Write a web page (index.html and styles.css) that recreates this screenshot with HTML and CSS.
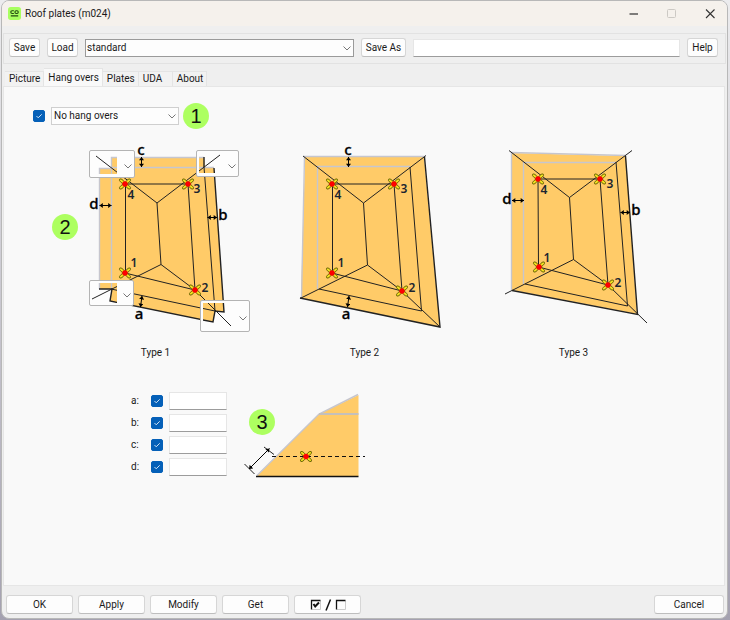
FILE: index.html
```html
<!DOCTYPE html>
<html lang="en">
<head>
<meta charset="utf-8">
<title>Roof plates (m024)</title>
<link rel="stylesheet" href="styles.css">
</head>
<body>
<svg class="defs" aria-hidden="true">
  <defs>
    <symbol id="chevron" viewBox="0 0 8 5"><path d="M.5 .5 4 4 7.5 .5" fill="none" stroke="#777"/></symbol>
    <g id="node">
      <g fill="#f0e020" stroke="#5a5600" stroke-width=".8">
        <ellipse cx="4" cy="0" rx="3.2" ry="1.5" transform="rotate(42)"/>
        <ellipse cx="4" cy="0" rx="3.2" ry="1.5" transform="rotate(138)"/>
        <ellipse cx="4" cy="0" rx="3.2" ry="1.5" transform="rotate(222)"/>
        <ellipse cx="4" cy="0" rx="3.2" ry="1.5" transform="rotate(318)"/>
      </g>
      <circle r="2.7" fill="#f00"/>
    </g>
    <marker id="tip" viewBox="0 0 4 6" refX="4" refY="3" markerWidth="4" markerHeight="5" markerUnits="userSpaceOnUse" orient="auto-start-reverse"><path d="M0 0 4 3 0 6z"/></marker>
    <g id="roof-notched">
      <path class="fill" d="M99 168H111V157H204L205 168H214L224 312 215 311 213 322 110 301 112 289H99z"/>
      <path class="pale" d="M99.500 289V168.500H111M111.500 289V157.500H204M111 167.500H214"/>
      <path class="edge" d="M214 168 224 312 215 311 213 322 110 301 112 289H99M204 157V167"/>
      <path class="line" d="M204 167 215 311 111 289M96 156 157 203 161 264.500 92 299M220 155 157 203M161 264.500 195 290 231 326"/>
    </g>
  </defs>
</svg>

<div class="window">
  <header class="titlebar">
    <svg class="logo" viewBox="0 0 14 14" aria-hidden="true"><rect width="14" height="14" rx="3" fill="#a8ff60"/><g fill="none" stroke="#234a12" stroke-width="1.200"><path d="M6.300 4H4.500Q3 4 3 5.500T4.500 7H6.300M3 9.500H11"/><rect x="7.500" y="4" width="3.500" height="3" rx="1.300"/></g></svg>
    <h1>Roof plates (m024)</h1>
    <div class="caption-buttons">
      <button aria-label="Minimize"><svg viewBox="0 0 10 10"><path d="M.5 5H9" stroke="#555" stroke-width="1.300"/></svg></button>
      <button aria-label="Maximize" disabled><svg viewBox="0 0 10 10"><rect x=".5" y=".5" width="8" height="8" rx="1" fill="none" stroke="#ccc9c4"/></svg></button>
      <button aria-label="Close"><svg viewBox="0 0 10 10"><path d="M1 .5 9.500 9M9.500 .5 1 9" stroke="#333" stroke-width="1.100"/></svg></button>
    </div>
  </header>

  <div class="toolbar">
    <button class="btn">Save</button>
    <button class="btn">Load</button>
    <div class="select preset"><select aria-label="Saved settings"><option>standard</option></select><svg class="chevron" aria-hidden="true"><use href="#chevron"/></svg></div>
    <button class="btn wide">Save As</button>
    <input class="text name" type="text" aria-label="Save as name">
    <button class="btn">Help</button>
  </div>

  <nav class="tabs" role="tablist">
    <button role="tab">Picture</button>
    <button role="tab" aria-selected="true">Hang overs</button>
    <button role="tab">Plates</button>
    <button role="tab">UDA</button>
    <button role="tab">About</button>
  </nav>

  <main class="panel">
    <div class="mode">
      <span class="check"><input type="checkbox" checked aria-label="Use hang over type"><svg viewBox="0 0 12 12" aria-hidden="true"><path d="M3.500 6 5.200 7.800 8.700 4.300"/></svg></span>
      <div class="select kind"><select aria-label="Hang over type"><option>No hang overs</option></select><svg class="chevron" aria-hidden="true"><use href="#chevron"/></svg></div>
      <span class="badge">1</span>
    </div>

    <div class="types">
      <figure>
        <svg class="plan" viewBox="51 136 209 199">
          <use href="#roof-notched"/>
          <path class="line" d="M125.500 273V184H188L195 290 125 273"/>
          <path class="dim" d="M141.500 157V167"/><path class="dim" d="M99.500 205.500H111.500"/><path class="dim" d="M207.500 217.500H217"/><path class="dim" d="M142 296 140.500 307"/>
          <use href="#node" x="125" y="184"/><use href="#node" x="188" y="184"/><use href="#node" x="125" y="273"/><use href="#node" x="195" y="290"/>
          <g class="letter"><text x="141" y="155">c</text><text x="94" y="209">d</text><text x="223" y="220">b</text><text x="139" y="319">a</text></g>
          <g class="number"><text x="131" y="199">4</text><text x="197" y="193">3</text><text x="134" y="267">1</text><text x="205" y="292">2</text></g>
        </svg>
        <span class="badge corner-badge">2</span>
        <div class="select corner corner-4"><select aria-label="Corner 4"><option></option></select><svg class="thumb" viewBox="92 153 25 21" width="25" height="21"><use href="#roof-notched"/></svg><svg class="chevron" aria-hidden="true"><use href="#chevron"/></svg></div>
        <div class="select corner corner-3"><select aria-label="Corner 3"><option></option></select><svg class="thumb" viewBox="199 153 22 20" width="22" height="20"><use href="#roof-notched"/></svg><svg class="chevron" aria-hidden="true"><use href="#chevron"/></svg></div>
        <div class="select corner corner-1"><select aria-label="Corner 1"><option></option></select><svg class="thumb" viewBox="92 283 25 20" width="25" height="20"><use href="#roof-notched"/></svg><svg class="chevron" aria-hidden="true"><use href="#chevron"/></svg></div>
        <div class="select corner corner-2"><select aria-label="Corner 2"><option></option></select><svg class="thumb" viewBox="203 303 29 25" width="29" height="25"><use href="#roof-notched"/></svg><svg class="chevron" aria-hidden="true"><use href="#chevron"/></svg></div>
        <figcaption>Type 1</figcaption>
      </figure>

      <figure>
        <svg class="plan" viewBox="260 136 209 199">
          <path class="fill" d="M305 157H424L440 327 301 298z"/>
          <path class="pale" d="M301.500 298 304.500 156.500H425M317.500 289V166.500H410"/>
          <path class="edge" d="M424.500 157 440 327 300 298"/>
          <path class="line" d="M410 167 421.500 311 319 289M303 156 363.500 203 367.500 265 300 298.500M426 155.500 363.500 203M367.500 265 402 291 440 327M332.500 273V184H394L402 291 332 273"/>
          <path class="dim" d="M348.500 157V167"/><path class="dim" d="M349 296 347.500 307"/>
          <use href="#node" x="332" y="184"/><use href="#node" x="394" y="184"/><use href="#node" x="332" y="273"/><use href="#node" x="402" y="291"/>
          <g class="letter"><text x="348" y="155">c</text><text x="346" y="319">a</text></g>
          <g class="number"><text x="338" y="199">4</text><text x="404" y="193">3</text><text x="341" y="267">1</text><text x="412" y="292">2</text></g>
        </svg>
        <figcaption>Type 2</figcaption>
      </figure>

      <figure>
        <svg class="plan" viewBox="469 136 209 199">
          <path class="fill" d="M512 153 626 156 637 314 512 290z"/>
          <path class="pale" d="M511.500 290V152.500L626 155.500M523.500 284V162.500H616"/>
          <path class="edge" d="M625.500 156 637.500 314.500 512 290.500"/>
          <path class="line" d="M616 162 627.500 306 525 284M509 150.500 569.500 197.500 573.500 259.500 505 294M632 150.500 569.500 197.500M573.500 259.500 608 285 647 323M538 179 538.500 267 608 285 600 179H538"/>
          <path class="dim" d="M512 200.500H524"/><path class="dim" d="M620.500 212.500H630"/>
          <use href="#node" x="538" y="179"/><use href="#node" x="600" y="179"/><use href="#node" x="539" y="267"/><use href="#node" x="608" y="285"/>
          <g class="letter"><text x="507" y="204">d</text><text x="636" y="215">b</text></g>
          <g class="number"><text x="544" y="194">4</text><text x="610" y="188">3</text><text x="547" y="262">1</text><text x="618" y="287">2</text></g>
        </svg>
        <figcaption>Type 3</figcaption>
      </figure>
    </div>

    <div class="sizes">
      <div class="fields">
        <div class="field"><label for="a">a:</label><span class="check"><input type="checkbox" checked aria-label="Use a"><svg viewBox="0 0 12 12" aria-hidden="true"><path d="M3.500 6 5.200 7.800 8.700 4.300"/></svg></span><input class="text" id="a" type="text"></div>
        <div class="field"><label for="b">b:</label><span class="check"><input type="checkbox" checked aria-label="Use b"><svg viewBox="0 0 12 12" aria-hidden="true"><path d="M3.500 6 5.200 7.800 8.700 4.300"/></svg></span><input class="text" id="b" type="text"></div>
        <div class="field"><label for="c">c:</label><span class="check"><input type="checkbox" checked aria-label="Use c"><svg viewBox="0 0 12 12" aria-hidden="true"><path d="M3.500 6 5.200 7.800 8.700 4.300"/></svg></span><input class="text" id="c" type="text"></div>
        <div class="field"><label for="d">d:</label><span class="check"><input type="checkbox" checked aria-label="Use d"><svg viewBox="0 0 12 12" aria-hidden="true"><path d="M3.500 6 5.200 7.800 8.700 4.300"/></svg></span><input class="text" id="d" type="text"></div>
      </div>
      <div class="section-view">
        <svg class="section" viewBox="240 392 128 88">
          <path class="fill" d="M257 476 319 414 358.500 395V476z"/>
          <path class="pale" d="M257 475.500 319 414 358 394.500"/>
          <path d="M319 414H358.500" stroke="#c4c0bc" stroke-width="2"/>
          <path d="M256 476.500H358.500" stroke="#111" stroke-width="1.500"/>
          <path d="M272 456.500H365" stroke="#111" stroke-dasharray="4 3"/>
          <path class="line" d="M244.500 464 254.500 474M264 447 274 454.500"/>
          <path class="dim" d="M249 469 269.500 448.500"/>
          <use href="#node" x="306" y="456.500"/>
        </svg>
        <span class="badge section-badge">3</span>
      </div>
    </div>
  </main>

  <footer class="actions">
    <button class="btn">OK</button>
    <button class="btn">Apply</button>
    <button class="btn">Modify</button>
    <button class="btn">Get</button>
    <button class="btn" aria-label="Toggle all check boxes"><svg class="toggle" viewBox="0 0 36 12"><g fill="none"><path d="M10.500 2V10.500H2" stroke="#ccc"/><path d="M10.500 1.500H1.500V10.500" stroke="#111" stroke-width="1.300"/><path d="M3.500 5 5.200 7.500 9 3.500" stroke="#111" stroke-width="2"/><path d="M20.500 .5 16 11.500" stroke="#111" stroke-width="1.500"/><path d="M35.500 2V10.500H27" stroke="#ccc"/><path d="M35.500 1.500H26.500V10.500" stroke="#111" stroke-width="1.300"/></g></svg></button>
    <button class="btn cancel">Cancel</button>
  </footer>
</div>
</body>
</html>
```
FILE: styles.css
```css
* { box-sizing: border-box; }

body {
  margin: 0;
  padding: 0 2px 1px 1px;
  min-height: 100vh;
  display: flex;
  background: linear-gradient(#ececee, #a4a1b0);
  color: #1a1a1a;
  font: 10px/14px Roboto, "Liberation Sans", sans-serif;
}

button, input, select { font: inherit; color: inherit; margin: 0; }

.defs { position: absolute; width: 0; height: 0; }

.window {
  flex: 1;
  display: flex;
  flex-direction: column;
  background: #efefef;
  border: 1px solid #b8b8b8;
  border-radius: 8px;
  overflow: hidden;
}

.titlebar {
  display: flex;
  align-items: center;
  height: 25px;
  padding: 0 7px 0 6px;
  gap: 4px;
  background: #f5f1ec;
}
.titlebar h1 {
  flex: 1;
  margin: 0;
  font: inherit;
}
.logo { width: 13px; height: 13px; }
.caption-buttons { display: flex; gap: 18px; }
.caption-buttons button {
  display: flex;
  width: 20px;
  height: 20px;
  padding: 5px;
  border: 0;
  background: none;
}
.caption-buttons svg { width: 10px; height: 10px; }

.btn {
  flex: none;
  width: 31px;
  height: 19px;
  padding: 0;
  background: #fdfdfd;
  border: 1px solid #d6d6d6;
  border-bottom-color: #bebebe;
  border-radius: 3px;
  line-height: 16px;
}
.wide { width: 45px; }

.toolbar {
  display: flex;
  align-items: center;
  gap: 7px;
  margin: 7px 1px 0;
  padding: 0 7px 2px 5px;
  height: 31px;
  border: 1px solid #e2e2e2;
}

.select { position: relative; }
.select select {
  display: block;
  width: 100%;
  height: 18px;
  padding: 0 2px;
  appearance: none;
  background: #fdfdfd;
  border: 1px solid #cfcfcf;
  border-radius: 0;
}
.select svg { position: absolute; pointer-events: none; }
.chevron {
  width: 8px;
  height: 5px;
  right: 3px;
  top: 7px;
}
.preset { flex: 1 1 8px; }
.preset select { padding: 0 1px; border-color: #9a9a9a; }

.text {
  height: 18px;
  min-width: 0;
  padding: 0 2px;
  background: #fff;
  border: 1px solid #e6e6e6;
  border-bottom: 1px solid #9c9c9c;
}
.name { flex: 1; }

.tabs {
  display: flex;
  align-items: flex-end;
  height: 18px;
  margin: 4px 3px 0;
}
.tabs button {
  min-width: 34px;
  height: 15px;
  padding: 0 3px 0 4px;
  border: 1px solid #e4e4e4;
  border-width: 1px 1px 0 0;
  background: #f2f2f2;
  line-height: 14px;
  text-align: left;
}
.tabs button[aria-selected="true"] {
  height: 18px;
  background: #f9f9f9;
}

.panel {
  flex: 1;
  margin: 0 2px 0 1px;
  padding: 16px 0 0 29px;
  background: #f9f9f9;
  border: 1px solid #e6e6e6;
}

.mode { display: flex; align-items: center; gap: 6px; height: 26px; }
.kind { width: 128px; margin-right: -2px; }

.check { position: relative; display: flex; width: 12px; height: 12px; }
.check input {
  appearance: none;
  width: 12px;
  height: 12px;
  background: #fff;
  border: 1px solid #777;
  border-radius: 2px;
}
.check input:checked { background: #0560b8; border-color: #0560b8; }
.check svg {
  position: absolute;
  inset: 0;
  fill: none;
  stroke: #cfe2f5;
  pointer-events: none;
}

.badge {
  display: block;
  width: 26px;
  height: 26px;
  border-radius: 50%;
  background: #adff60;
  color: #111;
  font: 20px/26px "Liberation Sans", sans-serif;
  text-align: center;
}

.types {
  display: grid;
  grid-template-columns: repeat(3, 209px);
  margin: 7px 0 0 18px;
}
figure { position: relative; margin: 0; text-align: center; }
.plan { display: block; width: 209px; height: 199px; }
figcaption { margin-top: 11px; }

.fill { fill: #ffcb68; }
.pale { fill: none; stroke: #c6c6ce; stroke-width: 1.4; }
.edge { fill: none; stroke: #222; stroke-width: 1.4; }
.line { fill: none; stroke: #222; }
.dim { fill: none; stroke: #000; marker-start: url(#tip); marker-end: url(#tip); }
.letter { font: 500 15px "Noto Sans", sans-serif; text-anchor: middle; stroke: #000; stroke-width: .3; }
.number { font: 600 12px "Noto Sans", sans-serif; text-anchor: middle; fill: #1c2530; }

.corner-badge { position: absolute; left: 1px; top: 78px; }
.corner { position: absolute; }
.corner select { height: 100%; border-color: #b4b4b4; border-radius: 2px; }
.corner .thumb { left: 3px; top: 3px; }
.corner .chevron { top: 50%; }
.corner-4 { left: 38px; top: 14px; width: 46px; height: 28px; }
.corner-3 { left: 145px; top: 14px; width: 43px; height: 27px; }
.corner-1 { left: 38px; top: 144px; width: 45px; height: 26px; }
.corner-2 { left: 149px; top: 164px; width: 50px; height: 32px; }

.sizes { display: flex; gap: 13px; margin: 32px 0 0 98px; }
.fields { display: flex; flex-direction: column; gap: 4px; }
.field { display: flex; align-items: center; gap: 6px; }
.field label { width: 14px; }
.field .text { width: 58px; }
.section-view { position: relative; }
.section { display: block; width: 128px; height: 88px; }
.section-badge { position: absolute; left: 9px; top: 17px; }

.actions {
  display: flex;
  gap: 5px;
  padding: 9px 3px 4px 4px;
}
.actions .btn { width: 67px; }
.actions .cancel { width: 70px; margin-left: auto; }
.toggle { display: block; width: 36px; height: 12px; margin: 0 auto; }
```
